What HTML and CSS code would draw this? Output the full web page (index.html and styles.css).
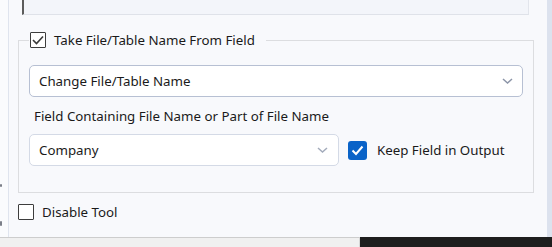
FILE: index.html
```html
<!DOCTYPE html>
<html lang="en">
<head>
  <meta charset="UTF-8" />
  <title>Output Options</title>
  <link rel="stylesheet" href="styles.css">
</head>
<body>
  <div class="screen">
    <div class="main-row">
      <div class="gutter">
        <span class="mark"></span>
        <span class="mark mark-low"></span>
      </div>

      <div class="panel">
        <div class="top-box"></div>

        <fieldset class="group">
          <legend>
            <label class="check">
              <span class="box box-ticked">
                <svg width="12" height="10" viewBox="0 0 12 10"><polyline points="1,5 4.5,8.5 11,1.5" fill="none" stroke="#3a3a3a" stroke-width="1.6"/></svg>
              </span>
              Take File/Table Name From Field
            </label>
          </legend>

          <div class="select select-wide">
            <span>Change File/Table Name</span>
            <svg class="chevron" width="11" height="6" viewBox="0 0 11 6"><polyline points="1,1 5.5,5 10,1" fill="none" stroke="#8c95a8" stroke-width="1.5"/></svg>
          </div>

          <p class="field-label">Field Containing File Name or Part of File Name</p>

          <div class="field-row">
            <div class="select select-narrow">
              <span>Company</span>
              <svg class="chevron" width="11" height="6" viewBox="0 0 11 6"><polyline points="1,1 5.5,5 10,1" fill="none" stroke="#a3abbb" stroke-width="1.5"/></svg>
            </div>
            <label class="check">
              <span class="box box-blue">
                <svg width="13" height="11" viewBox="0 0 13 11"><polyline points="1.5,5.5 5,9 11.5,1.5" fill="none" stroke="#ffffff" stroke-width="2"/></svg>
              </span>
              Keep Field in Output
            </label>
          </div>
        </fieldset>

        <label class="check disable">
          <span class="box"></span>
          Disable Tool
        </label>
      </div>

      <div class="scroll-edge"></div>
    </div>

    <div class="status">
      <div class="status-light"></div>
      <div class="status-dark"></div>
    </div>
  </div>
</body>
</html>
```

FILE: styles.css
```css
body {
  margin: 0;
  font-family: "Noto Sans", "Open Sans", sans-serif;
  font-size: 13.3px;
  color: #1a1a1a;
  background-color: #f8f9fc;
}

.screen {
  width: 552px;
  height: 247px;
  display: flex;
  flex-direction: column;
  overflow: hidden;
}

.main-row {
  display: flex;
  height: 237px;
}

/* left strip with the cut-off markers */
.gutter {
  width: 9px;
  border-right: 1px solid #dfe4ee;
  background-color: #fafbfd;
  display: flex;
  flex-direction: column;
  padding-top: 184px;
  box-sizing: border-box;
}

.mark {
  width: 2px;
  height: 3px;
  background-color: #7b7f88;
  border-radius: 1px;
}

.mark-low {
  margin-top: 34px;
  height: 5px;
}

.panel {
  flex: 1;
  background-color: #f8f9fc;
}

.scroll-edge {
  width: 5px;
  background-color: #dce2ee;
}

.top-box {
  height: 14px;
  margin: 0 18px 0 13px;
  background-color: #f3f5fa;
  border-left: 2px solid #5c5c5c;
  border-right: 1px solid #e2e5ec;
  border-bottom: 1px solid #dfe2e9;
}

/* group box */
.group {
  margin: 17px 13px 0 9px;
  padding: 17px 10px 26px 10px;
  border: 1px solid #dcdde0;
  min-width: 0;
}

.group legend {
  padding: 0 11px 0 1px;
  height: 16px;
  line-height: 16px;
}

.check {
  display: flex;
  align-items: center;
  gap: 8px;
  white-space: nowrap;
}

.box {
  width: 16px;
  height: 16px;
  box-sizing: border-box;
  border: 1.5px solid #3d3d3d;
  border-radius: 1px;
  background-color: #ffffff;
  display: flex;
  align-items: center;
  justify-content: center;
  flex: none;
}

.box-blue {
  width: 19px;
  height: 19px;
  border: none;
  border-radius: 3px;
  background-color: #0a63c8;
}

.select {
  height: 32px;
  box-sizing: border-box;
  background-color: #ffffff;
  border-radius: 5px;
  display: flex;
  align-items: center;
  justify-content: space-between;
  padding: 0 9px 0 9px;
}

.select-wide {
  border: 1px solid #b7c0d3;
}

.select-narrow {
  width: 310px;
  border: 1px solid #d4dae6;
  padding-right: 10px;
}

.field-label {
  margin: 10px 0 9px 5px;
  line-height: 18px;
}

.field-row {
  display: flex;
  align-items: center;
  gap: 9px;
}

.field-row .check {
  gap: 10px;
}

.disable {
  margin: 10px 0 0 9px;
}

.status {
  display: flex;
  height: 10px;
}

.status-light {
  width: 359px;
  background-color: #f0f0f0;
  border-top: 1px solid #cdcdcd;
  border-right: 1px solid #d6d6d6;
}

.status-dark {
  flex: 1;
  background-color: #1e1e1e;
}
```
